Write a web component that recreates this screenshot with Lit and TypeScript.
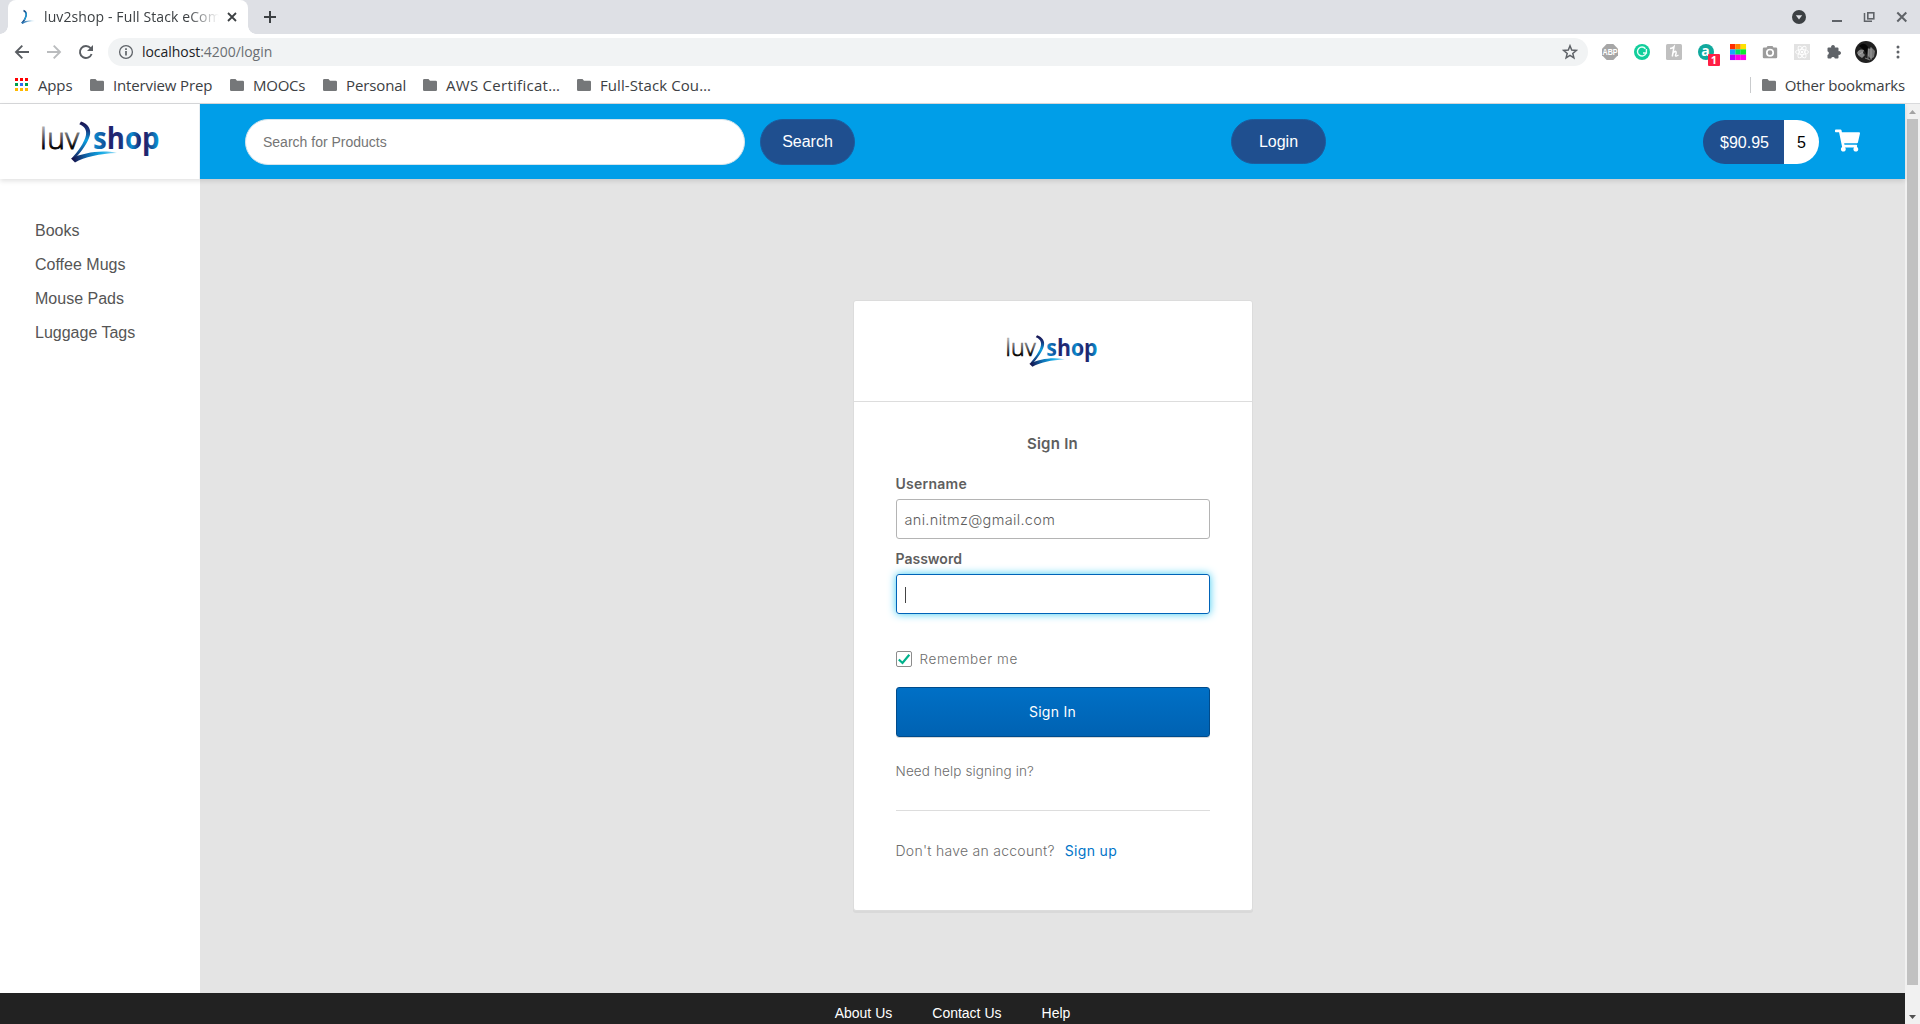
import { LitElement, html, css, svg } from "lit";
import { customElement } from "lit/decorators.js";

@customElement("shop-logo")
class ShopLogo extends LitElement {
  static styles = css`
    :host { display: block; }
    svg { display: block; width: 100%; height: 100%; overflow: visible; }
    .luv { font: 300 30px "Open Sans", sans-serif; }
    .shop { font: 700 29.500px "Open Sans", sans-serif; }
  `;
  render() {
    return html`<svg viewBox="0 0 118 44">
      <defs>
        <linearGradient id="g1" x1="0" y1="0" x2="0" y2="1">
          <stop offset=".25" stop-color="#aaa" /><stop offset=".72" stop-color="#050505" />
        </linearGradient>
        <linearGradient id="g2" x1="0" y1="0" x2="1" y2="0">
          <stop offset="0" stop-color="#0b93d6" /><stop offset=".16" stop-color="#12579f" /><stop offset=".26" stop-color="#21226c" />
          <stop offset=".42" stop-color="#1d2f7c" /><stop offset=".58" stop-color="#0a8fd2" /><stop offset=".7" stop-color="#20246e" />
          <stop offset=".8" stop-color="#20246e" /><stop offset="1" stop-color="#05a3e4" />
        </linearGradient>
        <linearGradient id="g3" gradientUnits="userSpaceOnUse" x1="36" y1="2" x2="34" y2="42">
          <stop offset="0" stop-color="#1a1450" /><stop offset=".2" stop-color="#17377f" /><stop offset=".45" stop-color="#0aa0e0" />
          <stop offset=".7" stop-color="#125a9c" /><stop offset="1" stop-color="#150c45" />
        </linearGradient>
        <linearGradient id="g4" gradientUnits="userSpaceOnUse" x1="30" y1="40" x2="75" y2="34">
          <stop offset="0" stop-color="#150c45" /><stop offset=".35" stop-color="#0f6cb0" /><stop offset=".65" stop-color="#12a8e4" /><stop offset="1" stop-color="#9bdcf5" />
        </linearGradient>
      </defs>
      <text class="luv" x="-2" y="29" textLength="39" fill="url(#g1)" stroke="url(#g1)" stroke-width=".9">luv</text>
      <path d="M39 1.600C46 4 49.500 9.500 47.800 15.500C46 23 39 32 33.500 38L29.500 38.500C36 31.500 42.500 22.500 44 15C45 9.500 42 6 37.300 4.200Z" fill="url(#g3)" />
      <path d="M29 38.500L33 42.500C42 37 58 33.500 75 33C60 29.500 42 32.500 29 38.500Z" fill="url(#g4)" />
      <text class="shop" x="51" y="29" textLength="66.500" lengthAdjust="spacingAndGlyphs" fill="url(#g2)">shop</text>
    </svg>`;
  }
}

const folder = html`<svg class="folder" width="14" height="12" viewBox="0 0 14 12"><path d="M1.300 0H5.500L7 1.700H12.700Q14 1.700 14 3V10.700Q14 12 12.700 12H1.300Q0 12 0 10.700V1.300Q0 0 1.300 0Z" fill="#757779" /></svg>`;

@customElement("browser-chrome")
class BrowserChrome extends LitElement {
  static styles = css`
    :host { display: block; height: 104px; box-sizing: border-box; background: #fff; border-bottom: 1px solid #d9dadc; font: 14px/20px "Open Sans", sans-serif; color: #3c4043; }
    svg { display: block; flex: none; }
    .strip { height: 34px; background: #dee0e5; display: flex; align-items: stretch; }
    .foot { width: 8px; background: radial-gradient(circle at 0 0, #dee0e5 7.500px, #fff 8px); height: 8px; align-self: flex-end; }
    .foot.right { background: radial-gradient(circle at 100% 0, #dee0e5 7.500px, #fff 8px); }
    .tab { width: 240px; box-sizing: border-box; background: #fff; border-radius: 8px 8px 0 0; display: flex; align-items: center; padding: 0 11px 0 12px; }
    .title { width: 175px; margin: 0 8px 0 8px; white-space: nowrap; overflow: hidden; letter-spacing: .11px; -webkit-mask-image: linear-gradient(90deg, #000 82%, transparent 100%); mask-image: linear-gradient(90deg, #000 82%, transparent 100%); }
    .plus { margin: 11px 0 0 8px; }
    .win { margin-left: auto; display: flex; align-items: center; padding-right: 12px; }
    .bar { height: 36px; box-sizing: border-box; display: flex; align-items: center; padding: 0 6px 0 14px; }
    .nav { display: flex; gap: 16px; width: 94px; }
    .omni { flex: 1; height: 28px; border-radius: 14px; background: #f1f3f4; display: flex; align-items: center; padding: 0 10px; margin-right: 6px; }
    .url { margin-left: 8px; letter-spacing: -.05px; color: #6a6e72; flex: 1; }
    .url b { font-weight: 400; color: #202124; }
    .ext { display: grid; grid-template-columns: repeat(10, 32px); justify-items: center; align-items: center; height: 28px; }
    .ext svg { overflow: visible; }
    .marks { height: 29px; display: flex; align-items: center; font-size: 15px; padding: 0 15px; }
    .list { display: grid; grid-template-columns: 75px 140px 93px 100px 154px 150px; }
    .mark { display: flex; align-items: center; white-space: nowrap; }
    .mark svg { margin-right: 9px; }
    .mark .apps { margin-right: 10px; }
    .t0 { letter-spacing: -.15px; } .t1 { letter-spacing: -.14px; } .t2 { letter-spacing: -.24px; }
    .t3 { letter-spacing: -.11px; } .t4 { letter-spacing: .28px; } .t5 { letter-spacing: .09px; }
    .other { margin-left: auto; border-left: 1px solid #c9cbcd; padding-left: 11px; height: 16px; letter-spacing: -.2px; }
  `;
  render() {
    const dots = ["#f00", "#f00", "#f00", "#00a04f", "#2f6bf0", "#00a04f", "#ffb900", "#ffb900", "#ffb900"];
    const pal = ["#ff2d00", "#ff8a00", "#ffe000", "#18a4ff", "#00dc64", "#0ceb30", "#b400ff", "#ff00e6", "#ff00f0"];
    const names = ["Interview Prep", "MOOCs", "Personal", "AWS Certificat…", "Full-Stack Cou…"];
    return html`
      <div class="strip">
        <div class="foot"></div>
        <div class="tab">
          <svg width="16" height="16" viewBox="0 0 16 16"><defs><linearGradient id="f"><stop offset="0" stop-color="#1463a8" /><stop offset="1" stop-color="#c8ecfa" /></linearGradient></defs><path d="M3.500 1.500C8 3.500 6.500 9 2 14" fill="none" stroke="#174f8c" stroke-width="1.500" /><path d="M5.700 3.500Q7.300 6.500 4.200 11" fill="none" stroke="#1ba5df" stroke-width="1.100" /><path d="M1 13.500L2.500 15Q7 12 15 12Q7 10.500 1 13.500Z" fill="url(#f)" /></svg>
          <div class="title">luv2shop - Full Stack eCom</div>
          <svg width="10" height="10" viewBox="0 0 10 10"><path d="M1 1L9 9M9 1L1 9" stroke="#3c4043" stroke-width="1.800" /></svg>
        </div>
        <div class="foot right"></div>
        <svg class="plus" width="12" height="12" viewBox="0 0 12 12"><path d="M6 0V12M0 6H12" stroke="#3c4043" stroke-width="2" /></svg>
        <div class="win">
          <svg width="14" height="14" viewBox="0 0 14 14"><circle cx="7" cy="7" r="7" fill="#3c4043" /><path d="M3.800 5.200H10.200L7 9.500Z" fill="#dee0e5" /></svg>
          <svg width="31" height="14" viewBox="0 0 31 14"><path d="M26 11H36" stroke="#5f6368" stroke-width="2" /></svg>
          <svg width="44" height="14" viewBox="0 0 44 14"><path d="M-5 11H5" stroke="#5f6368" stroke-width="2" /><path d="M27.500 3V11.300H35" fill="none" stroke="#5f6368" stroke-width="1.500" /><rect x="30.800" y="2.800" width="6" height="6" fill="none" stroke="#5f6368" stroke-width="1.600" /></svg>
          <svg width="27" height="14" viewBox="0 0 27 14"><path d="M16.300 2.500L25.300 11.500M25.300 2.500L16.300 11.500" stroke="#5f6368" stroke-width="2" /></svg>
        </div>
      </div>
      <div class="bar">
        <div class="nav">
          <svg width="16" height="16" viewBox="0 0 16 16"><path d="M15 8H2M8.300 1.700L2 8L8.300 14.300" fill="none" stroke="#5a5e63" stroke-width="1.900" /></svg>
          <svg width="16" height="16" viewBox="0 0 16 16"><path d="M1 8H14M7.700 1.700L14 8L7.700 14.300" fill="none" stroke="#babcbe" stroke-width="1.900" /></svg>
          <svg width="16" height="16" viewBox="0 0 16 16"><path d="M13.600 10A6 6 0 1 1 12.600 4.200" fill="none" stroke="#5a5e63" stroke-width="1.900" /><path d="M15 1V7H9Z" fill="#5a5e63" /></svg>
        </div>
        <div class="omni">
          <svg width="16" height="16" viewBox="0 0 16 16"><circle cx="8" cy="8" r="6.400" fill="none" stroke="#5f6368" stroke-width="1.300" /><path d="M8 7V11.500M8 4.300V5.900" stroke="#5f6368" stroke-width="1.700" /></svg>
          <span class="url"><b>localhost</b>:4200/login</span>
          <svg width="16" height="16" viewBox="0 0 16 16"><path d="M8 1.800L9.700 6.100L14.300 6.400L10.800 9.400L11.900 13.900L8 11.400L4.100 13.900L5.200 9.400L1.700 6.400L6.300 6.100Z" fill="none" stroke="#5f6368" stroke-width="1.500" /></svg>
        </div>
        <div class="ext">
          <svg width="16" height="16" viewBox="0 0 16 16"><path d="M4.700 0H11.300L16 4.700V11.300L11.300 16H4.700L0 11.300V4.700Z" fill="#a6a6a6" /><text x="8" y="11" font-size="8.500" font-weight="700" font-family="Liberation Sans, sans-serif" text-anchor="middle" textLength="15" lengthAdjust="spacingAndGlyphs" fill="#fff">ABP</text></svg>
          <svg width="16" height="16" viewBox="0 0 16 16"><circle cx="8" cy="8" r="8" fill="#11ce9b" /><path d="M11.500 4.700A4.500 4.500 0 1 0 12 9.500M12.400 5V9H9" fill="none" stroke="#e8fff8" stroke-width="1.400" /></svg>
          <svg width="16" height="16" viewBox="0 0 16 16"><rect width="16" height="16" rx="1.500" fill="#c0c0c0" /><path d="M4 4.500Q6.500 4.500 8 2.800L6.300 12.500M7 9Q9 6.500 10 7.800Q10.500 9 9.500 11.500Q9.500 13 12.500 11" fill="none" stroke="#fff" stroke-width="1.500" /></svg>
          <svg width="16" height="16" viewBox="0 0 16 16"><circle cx="8" cy="8" r="8" fill="#10a99d" /><text x="7.500" y="12" font-size="14" font-weight="700" font-family="Open Sans, sans-serif" text-anchor="middle" fill="#fff">a</text><rect x="10" y="10" width="12" height="12" rx="1" fill="#ff1f45" /><text x="16" y="20" font-size="11" font-weight="700" font-family="Open Sans, sans-serif" text-anchor="middle" fill="#fff">1</text></svg>
          <svg width="16" height="16" viewBox="0 0 16 16">${pal.map((c, i) => svg`<rect x=${(i % 3) * 5.33} y=${Math.floor(i / 3) * 5.33} width="5.400" height="5.400" fill=${c} />`)}</svg>
          <svg width="16" height="16" viewBox="0 0 16 16"><path d="M2 3.500H4.500L5.500 2H10.500L11.500 3.500H14Q15.200 3.500 15.200 4.700V13Q15.200 14.200 14 14.200H2Q.8 14.200 .8 13V4.700Q.8 3.500 2 3.500Z" fill="#9c9c9c" /><circle cx="8" cy="8.700" r="3.200" fill="#9c9c9c" stroke="#fff" stroke-width="1.700" /></svg>
          <svg width="16" height="16" viewBox="0 0 16 16"><rect width="16" height="16" fill="#e2e2e2" /><g fill="none" stroke="#fff" stroke-width=".9"><ellipse cx="8" cy="8" rx="6.500" ry="2.500" /><ellipse cx="8" cy="8" rx="6.500" ry="2.500" transform="rotate(60 8 8)" /><ellipse cx="8" cy="8" rx="6.500" ry="2.500" transform="rotate(120 8 8)" /></g><circle cx="8" cy="8" r="1.300" fill="#fff" /></svg>
          <svg width="16" height="16" viewBox="0 0 16 16"><path d="M1.500 4.500Q1.500 3.500 2.500 3.500H5.200A1.900 1.900 0 1 1 8.800 3.500H11.500Q12.500 3.500 12.500 4.500V7.200A1.900 1.900 0 1 1 12.500 10.800V13.500Q12.500 14.500 11.500 14.500H8.900A2 2 0 0 0 5.100 14.500H2.500Q1.500 14.500 1.500 13.500V11A2 2 0 0 0 1.500 7.200Z" fill="#5f6368" /></svg>
          <svg width="22" height="22" viewBox="0 0 22 22"><circle cx="11" cy="11" r="11" fill="#202020" /><path d="M2 12Q4 7 9 9L8 12L10 14L7 17L4 15Z" fill="#888" /><path d="M13 8L17 7L20 10L19 16L16 18L13 15Z" fill="#777" /><path d="M13 7V18M16 6V19M3 14L8 11M10 17L15 19" stroke="#bbb" stroke-width=".6" /><path d="M4 5Q9 0 13 6L12 14L9 9Z" fill="#050505" /></svg>
          <svg width="4" height="16" viewBox="0 0 4 16"><circle cx="2" cy="3" r="1.500" fill="#5f6368" /><circle cx="2" cy="8" r="1.500" fill="#5f6368" /><circle cx="2" cy="13" r="1.500" fill="#5f6368" /></svg>
        </div>
      </div>
      <div class="marks">
        <div class="list">
          <div class="mark t0"><svg class="apps" width="13" height="13" viewBox="0 0 13 13">${dots.map((c, i) => svg`<rect x=${(i % 3) * 5} y=${Math.floor(i / 3) * 5} width="3" height="3" fill=${c} />`)}</svg>Apps</div>
          ${names.map((n, i) => html`<div class="mark t${i + 1}">${folder}${n}</div>`)}
        </div>
        <div class="mark other">${folder}Other bookmarks</div>
      </div>`;
  }
}

@customElement("login-card")
class LoginCard extends LitElement {
  static styles = css`
    :host { display: block; width: 400px; height: 611px; box-sizing: border-box; background: #fff; border: 1px solid #dcdcdc; border-radius: 3px; box-shadow: 0 2px 0 rgba(175, 175, 175, .2); font: 14px/20px Inter, "Open Sans", sans-serif; color: #5e5e5e; }
    .head { height: 101px; border-bottom: 1px solid #ddd; display: flex; justify-content: center; padding-top: 33px; box-sizing: border-box; }
    .head shop-logo { width: 91px; height: 34px; }
    .body { padding: 32px 42px 0; display: flex; flex-direction: column; }
    h2 { margin: 0 0 20px; font-size: 15px; line-height: 20px; font-weight: 600; letter-spacing: .25px; text-align: center; }
    label { font-weight: 600; margin-bottom: 5px; }
    .user { letter-spacing: .25px; }
    .field { height: 40px; box-sizing: border-box; border: 1px solid #b4b4b4; border-radius: 3px; padding: 2px 8px 0; display: flex; align-items: center; font-size: 14.500px; font-weight: 300; letter-spacing: .33px; margin-bottom: 10px; }
    .focus { border-color: #0063b8; box-shadow: 0 0 8px #3ccbf2; margin-bottom: 37px; }
    .caret { width: 1px; height: 16px; background: #444; }
    .remember { display: flex; align-items: center; height: 16px; color: #6c6c6c; font-size: 13.500px; font-weight: 300; letter-spacing: .6px; gap: 8px; margin-bottom: 20px; }
    .box { width: 16px; height: 16px; box-sizing: border-box; border: 1px solid #8c8c8c; border-radius: 2px; }
    .box svg { display: block; }
    .btn { height: 50px; box-sizing: border-box; border: 1px solid #004b8b; border-radius: 3px; background: linear-gradient(#0070c6, #0062b2); color: #fff; display: flex; align-items: center; justify-content: center; letter-spacing: .28px; box-shadow: 0 1px 0 #d8d8d8; margin-bottom: 24px; }
    .help { color: #6c6c6c; font-weight: 300; font-size: 13.500px; letter-spacing: .13px; padding-bottom: 29px; border-bottom: 1px solid #ddd; margin-bottom: 30px; }
    .reg { display: flex; gap: 10px; color: #6c6c6c; font-weight: 300; letter-spacing: .27px; }
    .reg a { color: #0074c8; font-weight: 400; letter-spacing: .35px; }
  `;
  render() {
    return html`
      <div class="head"><shop-logo></shop-logo></div>
      <div class="body">
        <h2>Sign In</h2>
        <label class="user">Username</label>
        <div class="field">ani.nitmz@gmail.com</div>
        <label>Password</label>
        <div class="field focus"><span class="caret"></span></div>
        <div class="remember"><span class="box"><svg width="14" height="14" viewBox="0 0 14 14"><path d="M1.800 7.500L5.500 11L12.300 2.800" fill="none" stroke="#00b28c" stroke-width="2.200" /></svg></span>Remember me</div>
        <div class="btn">Sign In</div>
        <div class="help">Need help signing in?</div>
        <div class="reg"><span>Don't have an account?</span><a>Sign up</a></div>
      </div>`;
  }
}

@customElement("app-root")
class AppRoot extends LitElement {
  static styles = css`
    :host { display: flex; flex-direction: column; width: 1920px; height: 1024px; overflow: hidden; background: #fff; font: 16px/20px "Liberation Sans", Arial, sans-serif; color: #555; }
    .view { flex: 1; display: flex; min-height: 0; }
    .page { flex: 1; display: flex; flex-direction: column; }
    .header { height: 75px; display: flex; box-shadow: 0 2px 5px rgba(0, 0, 0, .12); z-index: 1; position: relative; }
    .brand { width: 200px; box-sizing: border-box; background: #fff; padding: 16px 0 0 42px; border-right: 1px solid #e8eef2; }
    .brand shop-logo { width: 118px; height: 44px; }
    .blue { flex: 1; background: #009ee8; display: flex; align-items: flex-start; padding: 15px 45px 0; color: #fff; box-sizing: border-box; }
    .search { width: 500px; height: 46px; border: 1px solid #d4e4ec; border-radius: 23px; background: #fff; color: #757575; font-size: 14px; box-sizing: border-box; padding: 0 17px; display: flex; align-items: center; }
    .pill { width: 95px; height: 46px; box-sizing: border-box; border: 1px solid #1c5c9f; border-radius: 23px; background: #1f4f8f; display: flex; align-items: center; justify-content: center; padding-bottom: 1px; }
    .go { margin-left: 15px; }
    .login { margin-left: 376px; height: 45px; padding: 1px 0 0; }
    .cart { margin: 1px 0 0 auto; display: flex; align-items: center; }
    .total, .qty { height: 44px; box-sizing: border-box; display: flex; align-items: center; padding-top: 1px; }
    .total { width: 81px; padding-left: 17px; background: #1f4f8f; border-radius: 22px 0 0 22px; }
    .qty { width: 35px; padding-left: 13px; background: #fff; color: #000; border-radius: 0 22px 22px 0; }
    .cart svg { margin: -4px 0 0 16px; display: block; }
    .mid { flex: 1; display: flex; }
    .side { width: 200px; box-sizing: border-box; padding: 42px 0 0 35px; }
    .side div { line-height: 20px; margin-bottom: 14px; }
    .main { flex: 1; background: #e4e4e4; display: flex; justify-content: center; align-items: flex-start; padding-top: 121px; box-sizing: border-box; }
    .footer { height: 31px; background: #222; color: #fff; font-size: 14px; display: flex; justify-content: center; gap: 40px; padding-top: 10px; box-sizing: border-box; }
    .scroll { width: 15px; background: #f1f1f1; display: flex; flex-direction: column; align-items: center; }
    .scroll svg { display: block; height: 15px; }
    .thumb { width: 11px; height: 866px; background: #c1c1c1; }
    .down { margin-top: 24px; }
  `;
  render() {
    return html`
      <browser-chrome></browser-chrome>
      <div class="view">
        <div class="page">
          <div class="header">
            <div class="brand"><shop-logo></shop-logo></div>
            <div class="blue">
              <div class="search">Search for Products</div>
              <div class="pill go">Search</div>
              <div class="pill login">Login</div>
              <div class="cart">
                <div class="total">$90.95</div><div class="qty">5</div>
                <svg width="25" height="23" viewBox="0 0 576 512"><path fill="#fff" d="M528.120 301.319l47.273-208C578.806 78.301 567.391 64 551.990 64H159.208l-9.166-44.810C147.758 8.021 137.930 0 126.529 0H24C10.745 0 0 10.745 0 24v16c0 13.255 10.745 24 24 24h69.883l70.248 343.435C147.325 417.100 136 435.222 136 456c0 30.928 25.072 56 56 56s56-25.072 56-56c0-15.674-6.447-29.835-16.824-40h209.647C430.447 426.165 424 440.326 424 456c0 30.928 25.072 56 56 56s56-25.072 56-56c0-22.172-12.888-41.332-31.579-50.405l5.517-24.276c3.413-15.018-8.002-29.319-23.403-29.319H218.117l-6.545-32h293.145c11.206 0 20.920-7.754 23.403-18.681z" /></svg>
              </div>
            </div>
          </div>
          <div class="mid">
            <div class="side"><div>Books</div><div>Coffee Mugs</div><div>Mouse Pads</div><div>Luggage Tags</div></div>
            <div class="main"><login-card></login-card></div>
          </div>
          <div class="footer"><span>About Us</span><span>Contact Us</span><span>Help</span></div>
        </div>
        <div class="scroll">
          <svg width="15" height="15"><path d="M4 10H11L7.500 6Z" fill="#a3a3a3" /></svg>
          <div class="thumb"></div>
          <svg class="down" width="15" height="15"><path d="M4 6H11L7.500 10Z" fill="#505050" /></svg>
        </div>
      </div>`;
  }
}
